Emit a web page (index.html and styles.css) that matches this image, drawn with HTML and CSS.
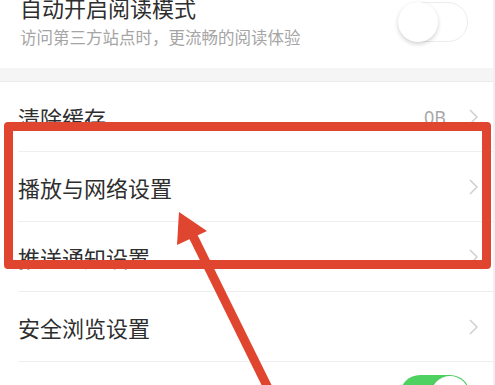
FILE: index.html
```html
<!DOCTYPE html>
<html lang="zh">
<head>
<meta charset="utf-8">
<link rel="stylesheet" href="styles.css">
</head>
<body>
<div class="page">
  <div class="top-row">
    <div class="top-text">
      <div class="title">自动开启阅读模式</div>
      <div class="sub">访问第三方站点时，更流畅的阅读体验</div>
    </div>
    <div class="toggle off"><span class="knob"></span></div>
  </div>
  <div class="band"></div>
  <div class="list">
    <div class="row">
      <span class="label">清除缓存</span>
      <span class="value">0B</span>
      <svg class="chev" width="9" height="16" viewBox="0 0 9 16"><polyline points="1,1 8,8 1,15" fill="none" stroke="#cfcfcf" stroke-width="1.5"/></svg>
    </div>
    <div class="row">
      <span class="label">播放与网络设置</span>
      <svg class="chev" width="9" height="16" viewBox="0 0 9 16"><polyline points="1,1 8,8 1,15" fill="none" stroke="#cfcfcf" stroke-width="1.5"/></svg>
    </div>
    <div class="row">
      <span class="label">推送通知设置</span>
      <svg class="chev" width="9" height="16" viewBox="0 0 9 16"><polyline points="1,1 8,8 1,15" fill="none" stroke="#cfcfcf" stroke-width="1.5"/></svg>
    </div>
    <div class="row">
      <span class="label">安全浏览设置</span>
      <svg class="chev" width="9" height="16" viewBox="0 0 9 16"><polyline points="1,1 8,8 1,15" fill="none" stroke="#cfcfcf" stroke-width="1.5"/></svg>
    </div>
    <div class="row">
      <span class="label">省流量模式</span>
      <div class="toggle on"><span class="knob"></span></div>
    </div>
  </div>

  <div class="highlight"></div>
  <svg class="arrow" width="495" height="385" viewBox="0 0 495 385">
    <line x1="193" y1="236" x2="270" y2="392" stroke="#e0452f" stroke-width="9"/>
    <polygon points="179,212 177,245 207,231" fill="#e0452f"/>
  </svg>
</div>
</body>
</html>
```

FILE: styles.css
```css
html, body {
  margin: 0;
  padding: 0;
  background: #fff;
}
body {
  width: 495px;
  height: 385px;
  overflow: hidden;
  font-family: "Noto Sans CJK SC", "Noto Sans", sans-serif;
}
.page {
  position: relative;
  width: 493px;
  height: 385px;
  border-right: 2px solid #f0f0f0;
  overflow: hidden;
}
.top-row {
  display: flex;
  justify-content: space-between;
  align-items: flex-start;
  margin-top: -6px;
  padding: 0 25px 21px 20px;
  height: 53px;
}
.title {
  font-size: 22px;
  line-height: 26px;
  color: #2e2e2e;
}
.sub {
  margin-top: 7px;
  font-size: 16.5px;
  line-height: 20px;
  color: #a5a5a5;
}
.toggle {
  position: relative;
  box-sizing: border-box;
  width: 70px;
  height: 40px;
  border-radius: 20px;
}
.toggle.off {
  margin-top: 8px;
  background: #fff;
  border: 1px solid #ececec;
}
.toggle.off .knob {
  position: absolute;
  left: -1px;
  top: -1px;
  width: 40px;
  height: 40px;
  border-radius: 50%;
  background: #fff;
  box-shadow: 0 2px 4px rgba(0,0,0,0.18);
}
.toggle.on {
  margin-left: auto;
  margin-right: 8px;
  margin-top: -4px;
  background: #4fd162;
}
.toggle.on .knob {
  position: absolute;
  right: 1px;
  top: 1px;
  width: 38px;
  height: 38px;
  border-radius: 50%;
  background: #fff;
  box-shadow: 0 1px 3px rgba(0,0,0,0.2);
}
.band {
  height: 13px;
  background: #f5f5f5;
  border-bottom: 1px solid #ebebeb;
}
.list {
  display: flex;
  flex-direction: column;
}
.row {
  display: flex;
  align-items: center;
  height: 69px;
  margin-left: 18px;
  padding-right: 15px;
  border-bottom: 1px solid #eeeeee;
}
.label {
  font-size: 22px;
  line-height: 26px;
  color: #2e2e2e;
  flex: 1;
}
.value {
  font-family: "Noto Sans", sans-serif;
  font-size: 18px;
  color: #a8a8a8;
  margin-right: 23px;
}
.chev {
  display: block;
}
.highlight {
  position: absolute;
  left: 4px;
  top: 122px;
  width: 487px;
  height: 147px;
  box-sizing: border-box;
  border: 9px solid #e0452f;
  border-radius: 4px;
}
.arrow {
  position: absolute;
  left: 0;
  top: 0;
}
```
